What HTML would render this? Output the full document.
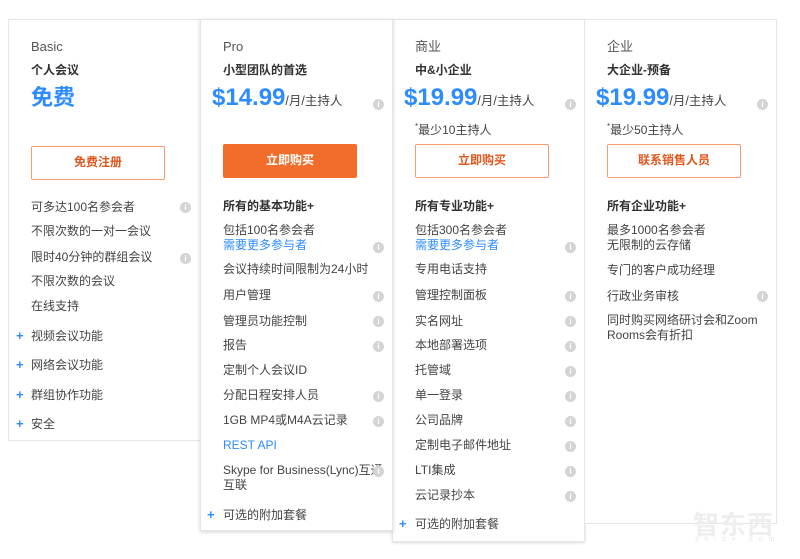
<!DOCTYPE html>
<html><head><meta charset="utf-8"><style>
*{margin:0;padding:0;box-sizing:border-box}
body{width:800px;height:559px;background:#fff;position:relative;overflow:hidden;font-family:"Liberation Sans","Noto Sans CJK SC",sans-serif;color:#444}
.card{position:absolute;background:#fff;border:1px solid #e6e6e6}
.t{position:absolute;font-size:12px;line-height:16px;white-space:nowrap;color:#444}
.b{font-weight:bold;color:#333}
.h{font-size:13px;color:#555}
.blue{color:#2d8cff}
.price{position:absolute;font-size:24px;font-weight:bold;color:#2d8cff;line-height:28px;white-space:nowrap}
.price span{font-size:12.5px;font-weight:normal;color:#444}
.btn{position:absolute;width:134px;height:34px;border:1.5px solid #f79a70;border-radius:2px;color:#e0561c;font-weight:bold;font-size:12px;text-align:center;line-height:31px}
.btn.f{background:#f26d2b;border-color:#f26d2b;color:#fff}
.i{position:absolute;width:11px;height:11px;border-radius:50%;background:#d4d4d4;color:#fff;font-size:8px;font-weight:bold;text-align:center;line-height:11px}
.p{position:absolute;color:#2d8cff;font-size:13px;font-weight:bold;line-height:16px}
</style></head><body>
<div class="card" style="left:8px;top:19px;width:193px;height:422px"></div>
<div class="card" style="left:392px;top:19px;width:193px;height:523px;box-shadow:0 1px 3px rgba(0,0,0,.15)"></div>
<div class="card" style="left:584px;top:19px;width:193px;height:505px"></div>
<div class="card" style="left:200px;top:19px;width:193px;height:512px;box-shadow:0 1px 4px rgba(0,0,0,.18)"></div>

<!-- Basic -->
<div class="t h" style="left:31px;top:39px">Basic</div>
<div class="t b" style="left:31px;top:62px">个人会议</div>
<div class="price" style="left:31px;top:84px;font-size:22px">免费</div>
<div class="btn" style="left:31px;top:146px">免费注册</div>
<div class="t" style="left:31px;top:199px">可多达100名参会者</div><div class="i" style="left:180px;top:202px">i</div>
<div class="t" style="left:31px;top:223px">不限次数的一对一会议</div>
<div class="t" style="left:31px;top:249px">限时40分钟的群组会议</div><div class="i" style="left:180px;top:253px">i</div>
<div class="t" style="left:31px;top:273px">不限次数的会议</div>
<div class="t" style="left:31px;top:298px">在线支持</div>
<div class="p" style="left:16px;top:328px">+</div><div class="t" style="left:31px;top:328px">视频会议功能</div>
<div class="p" style="left:16px;top:357px">+</div><div class="t" style="left:31px;top:357px">网络会议功能</div>
<div class="p" style="left:16px;top:387px">+</div><div class="t" style="left:31px;top:387px">群组协作功能</div>
<div class="p" style="left:16px;top:416px">+</div><div class="t" style="left:31px;top:416px">安全</div>

<!-- Pro -->
<div class="t h" style="left:223px;top:39px">Pro</div>
<div class="t b" style="left:223px;top:62px">小型团队的首选</div>
<div class="price" style="left:212px;top:84px">$14.99<span>/月/主持人</span></div><div class="i" style="left:373px;top:99px">i</div>
<div class="btn f" style="left:223px;top:144px">立即购买</div>
<div class="t b" style="left:223px;top:198px">所有的基本功能+</div>
<div class="t" style="left:223px;top:222px">包括100名参会者</div>
<div class="t blue" style="left:223px;top:237px">需要更多参与者</div><div class="i" style="left:373px;top:242px">i</div>
<div class="t" style="left:223px;top:261px">会议持续时间限制为24小时</div>
<div class="t" style="left:223px;top:287px">用户管理</div><div class="i" style="left:373px;top:291px">i</div>
<div class="t" style="left:223px;top:313px">管理员功能控制</div><div class="i" style="left:373px;top:316px">i</div>
<div class="t" style="left:223px;top:337px">报告</div><div class="i" style="left:373px;top:341px">i</div>
<div class="t" style="left:223px;top:362px">定制个人会议ID</div>
<div class="t" style="left:223px;top:387px">分配日程安排人员</div><div class="i" style="left:373px;top:391px">i</div>
<div class="t" style="left:223px;top:412px">1GB MP4或M4A云记录</div><div class="i" style="left:373px;top:416px">i</div>
<div class="t blue" style="left:223px;top:437px">REST API</div>
<div class="t" style="left:223px;top:462px">Skype for Business(Lync)互通</div><div class="i" style="left:373px;top:466px">i</div>
<div class="t" style="left:223px;top:477px">互联</div>
<div class="p" style="left:207px;top:507px">+</div><div class="t" style="left:223px;top:507px">可选的附加套餐</div>

<!-- Business -->
<div class="t h" style="left:415px;top:39px">商业</div>
<div class="t b" style="left:415px;top:62px">中&amp;小企业</div>
<div class="price" style="left:404px;top:84px">$19.99<span>/月/主持人</span></div><div class="i" style="left:565px;top:99px">i</div>
<div class="t" style="left:415px;top:119px"><sup style="font-size:8px">*</sup>最少10主持人</div>
<div class="btn" style="left:415px;top:144px">立即购买</div>
<div class="t b" style="left:415px;top:198px">所有专业功能+</div>
<div class="t" style="left:415px;top:222px">包括300名参会者</div>
<div class="t blue" style="left:415px;top:237px">需要更多参与者</div><div class="i" style="left:565px;top:242px">i</div>
<div class="t" style="left:415px;top:261px">专用电话支持</div>
<div class="t" style="left:415px;top:287px">管理控制面板</div><div class="i" style="left:565px;top:291px">i</div>
<div class="t" style="left:415px;top:313px">实名网址</div><div class="i" style="left:565px;top:316px">i</div>
<div class="t" style="left:415px;top:337px">本地部署选项</div><div class="i" style="left:565px;top:341px">i</div>
<div class="t" style="left:415px;top:362px">托管域</div><div class="i" style="left:565px;top:366px">i</div>
<div class="t" style="left:415px;top:387px">单一登录</div><div class="i" style="left:565px;top:391px">i</div>
<div class="t" style="left:415px;top:412px">公司品牌</div><div class="i" style="left:565px;top:416px">i</div>
<div class="t" style="left:415px;top:437px">定制电子邮件地址</div><div class="i" style="left:565px;top:441px">i</div>
<div class="t" style="left:415px;top:462px">LTI集成</div><div class="i" style="left:565px;top:466px">i</div>
<div class="t" style="left:415px;top:487px">云记录抄本</div><div class="i" style="left:565px;top:491px">i</div>
<div class="p" style="left:399px;top:516px">+</div><div class="t" style="left:415px;top:516px">可选的附加套餐</div>

<!-- Enterprise -->
<div class="t h" style="left:607px;top:39px">企业</div>
<div class="t b" style="left:607px;top:62px">大企业-预备</div>
<div class="price" style="left:596px;top:84px">$19.99<span>/月/主持人</span></div><div class="i" style="left:757px;top:99px">i</div>
<div class="t" style="left:607px;top:119px"><sup style="font-size:8px">*</sup>最少50主持人</div>
<div class="btn" style="left:607px;top:144px">联系销售人员</div>
<div class="t b" style="left:607px;top:198px">所有企业功能+</div>
<div class="t" style="left:607px;top:222px">最多1000名参会者</div>
<div class="t" style="left:607px;top:237px">无限制的云存储</div>
<div class="t" style="left:607px;top:262px">专门的客户成功经理</div>
<div class="t" style="left:607px;top:288px">行政业务审核</div><div class="i" style="left:757px;top:291px">i</div>
<div class="t" style="left:607px;top:312px">同时购买网络研讨会和Zoom</div>
<div class="t" style="left:607px;top:327px">Rooms会有折扣</div>

<div style="position:absolute;left:693px;top:505px;font-size:26px;color:#eeeeee;letter-spacing:1px;font-weight:bold">智东西</div>
<div style="position:absolute;left:695px;top:536px;font-size:7px;color:#e6e6e6;letter-spacing:6px">zhidx.com</div>
</body></html>
